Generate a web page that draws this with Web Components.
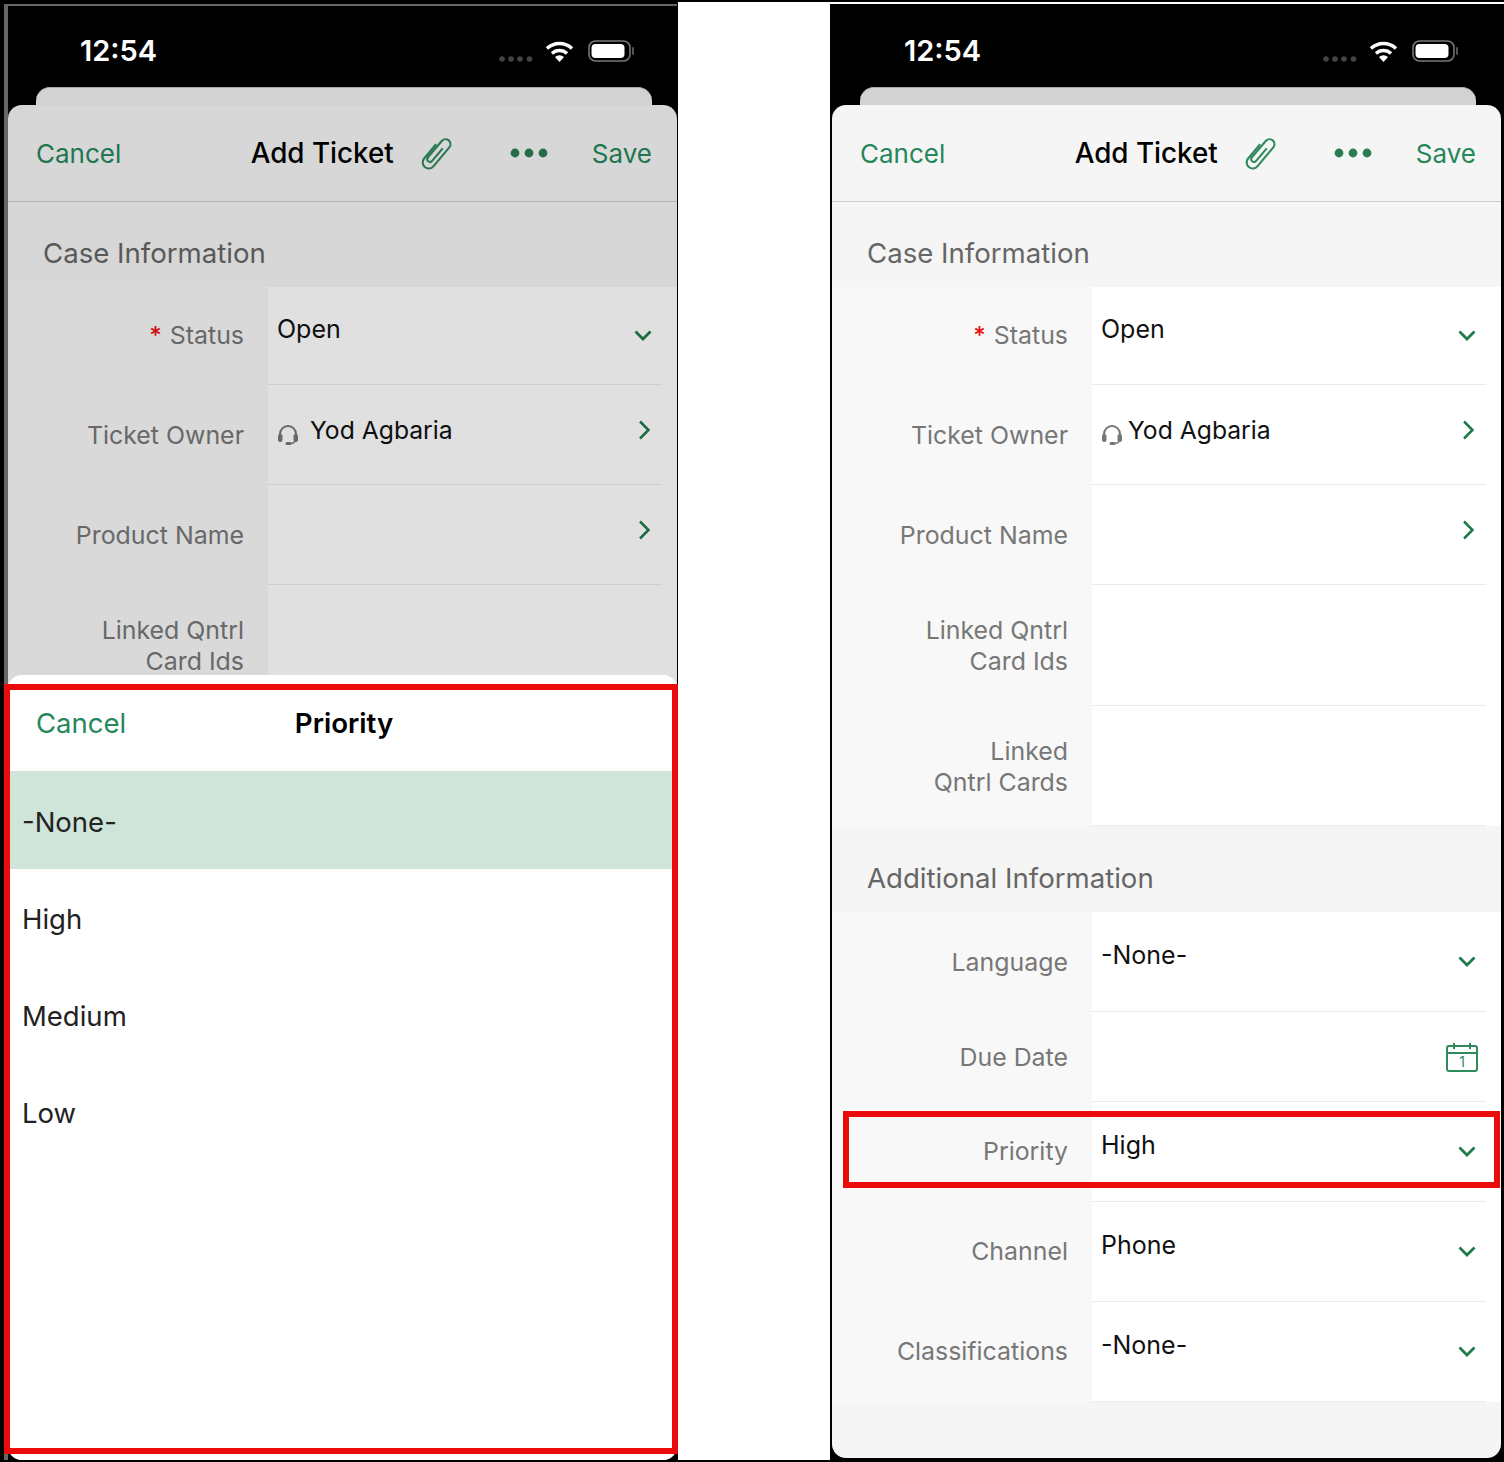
<!DOCTYPE html>
<html>
<head>
<meta charset="utf-8">
<title>Add Ticket</title>
<style>
  html, body { margin: 0; padding: 0; background: #fff; }
  body { font-family: Inter, "Noto Sans", sans-serif; }
</style>
</head>
<body>
<ticket-page>
  <phone-screen variant="left">
    <ticket-form dim owner-gap="11">
      <picker-sheet slot="sheet" title="Priority" options="-None-,High,Medium,Low" selected="-None-"></picker-sheet>
    </ticket-form>
    <red-frame slot="marks" style="left:4px;top:682px;width:674px;height:770px"></red-frame>
  </phone-screen>
  <phone-screen variant="right">
    <ticket-form owner-gap="5"></ticket-form>
    <red-frame slot="marks" style="left:13px;top:1107px;width:657px;height:77px"></red-frame>
  </phone-screen>
</ticket-page>

<script>
const GREEN = '#25875a';
const DARK_GREEN = '#1f7a4a';

const ICONS = {
  down: `<svg width="18" height="11" viewBox="0 0 18 11"><path d="M1.5 1.5 L9 9 L16.5 1.5" fill="none" stroke="${DARK_GREEN}" stroke-width="2.8"/></svg>`,
  right: `<svg width="13" height="20" viewBox="0 0 13 20"><path d="M2 1.5 L10.5 10 L2 18.5" fill="none" stroke="${DARK_GREEN}" stroke-width="2.5"/></svg>`,
  calendar: `<svg width="32" height="30" viewBox="0 0 32 30">
      <rect x="1" y="4" width="30" height="25" rx="2" fill="none" stroke="#2f8a5c" stroke-width="2"/>
      <path d="M1 11 H31 M8 1 V7 M24 1 V7" fill="none" stroke="#2f8a5c" stroke-width="2"/>
      <text x="16" y="25" text-anchor="middle" font-size="14" font-family="Inter, sans-serif" fill="#2f8a5c">1</text>
    </svg>`,
  headset: `<svg width="22" height="21" viewBox="0 0 22 21">
      <path d="M3 11 V10 a8 8 0 0 1 16 0 V11" fill="none" stroke="#777" stroke-width="2"/>
      <rect x="1" y="10" width="4.5" height="8" rx="2" fill="#777"/>
      <rect x="16.5" y="10" width="4.5" height="8" rx="2" fill="#777"/>
      <path d="M18 17 Q17.5 19.5 13 19.5" fill="none" stroke="#777" stroke-width="1.4"/>
      <rect x="8.5" y="18" width="6" height="3" rx="1.5" fill="#777"/>
    </svg>`
};

class TicketPage extends HTMLElement {
  constructor() {
    super();
    this.attachShadow({mode: 'open'}).innerHTML = `
      <style>
        :host {
          display: grid;
          grid-template-columns: 678px 674px;
          justify-content: space-between;
          box-sizing: border-box;
          height: 1462px;
          width: 1504px;
          border-top: 2px solid #000;
          border-bottom: 2px solid #000;
          background: #fff;
        }
      </style>
      <slot></slot>`;
  }
}

class PhoneScreen extends HTMLElement {
  constructor() {
    super();
    this.attachShadow({mode: 'open'}).innerHTML = `
      <style>
        :host {
          display: block;
          position: relative;
          background: #000;
          box-sizing: border-box;
        }
        :host([variant="left"]) { padding: 2px 1px 0 4px; }
        :host([variant="right"]) { margin-top: 2px; padding: 0 3px 2px 0; }
        .frame {
          box-sizing: border-box;
          height: 100%;
          display: flex;
          flex-direction: column;
          border-style: solid;
          border-width: 2px 0 0 4px;
          border-color: #666;
        }
        :host([variant="right"]) .frame { border-width: 2px 0 0 2px; border-color: #000; }
        .back {
          flex: none;
          height: 17px;
          margin: 0 25px 0 28px;
          border-radius: 14px 14px 0 0;
          background: #d2d2d2;
          border-top: 1px solid #aaa;
        }
        ::slotted(ticket-form) { flex: 1; min-height: 0; }
      </style>
      <div class="frame">
        <status-bar></status-bar>
        <div class="back"></div>
        <slot></slot>
      </div>
      <slot name="marks"></slot>`;
  }
}

class StatusBar extends HTMLElement {
  constructor() {
    super();
    this.attachShadow({mode: 'open'}).innerHTML = `
      <style>
        :host {
          display: flex;
          flex: none;
          align-items: center;
          box-sizing: border-box;
          height: 81px;
          padding: 8px 42px 0 72px;
          color: #fff;
        }
        .time { font: 600 29px Inter, sans-serif; flex: 1; }
        .icons { display: flex; align-items: center; gap: 12px; }
        svg { display: block; }
      </style>
      <span class="time">12:54</span>
      <span class="icons">
        <svg width="34" height="6" viewBox="0 0 34 6" style="margin-top:16px">
          <g fill="#444"><circle cx="3" cy="3" r="2.8"/><circle cx="12" cy="3" r="2.8"/><circle cx="21" cy="3" r="2.8"/><circle cx="30.5" cy="3" r="2.8"/></g>
        </svg>
        <svg width="29" height="22" viewBox="0 0 29 22">
          <g fill="none" stroke="#fff" stroke-width="3.4">
            <path d="M2 8.5 A18 18 0 0 1 27 8.5"/>
            <path d="M7 13.5 A11 11 0 0 1 22 13.5"/>
          </g>
          <path d="M14.5 22 L10 17 A6.5 6.5 0 0 1 19 17 Z" fill="#fff"/>
        </svg>
        <svg width="47" height="22" viewBox="0 0 47 22" style="margin-left:2px">
          <rect x="1" y="1" width="41" height="20" rx="6.5" fill="none" stroke="#777" stroke-width="1.6"/>
          <rect x="3.5" y="4" width="33" height="14" rx="4" fill="#fff"/>
          <rect x="44" y="7" width="2" height="8" rx="1" fill="#555"/>
        </svg>
      </span>`;
  }
}

class NavHeader extends HTMLElement {
  constructor() {
    super();
    this.attachShadow({mode: 'open'}).innerHTML = `
      <style>
        :host {
          display: flex;
          align-items: center;
          box-sizing: border-box;
          height: 97px;
          padding: 0 25px 0 28px;
          border-bottom: 1px solid #ccc;
          font-size: 26px;
          color: ${GREEN};
        }
        .title { margin-left: auto; color: #000; font-weight: 500; font-size: 27.8px; }
        .clip { margin-left: 27px; display: block; }
        .more { margin-left: 56px; display: block; }
        .save { margin-left: 44px; }
      </style>
      <span>Cancel</span>
      <span class="title">Add Ticket</span>
      <svg class="clip" width="33" height="33" viewBox="1.5 1 30 30">
        <g transform="rotate(40 16 16)" fill="none" stroke="#2f8a5c" stroke-width="1.9">
          <path d="M17 9 V24 a2.5 2.5 0 0 1 -5 0 V4.5 a4.5 4.5 0 0 1 9 0 V27 a5.5 5.5 0 0 1 -11 0 V10"/>
        </g>
      </svg>
      <svg class="more" width="38" height="10" viewBox="0 0 38 10">
        <g fill="#2a7d52"><circle cx="5" cy="5" r="4.4"/><circle cx="19" cy="5" r="4.4"/><circle cx="33" cy="5" r="4.4"/></g>
      </svg>
      <span class="save">Save</span>`;
  }
}

class SectionHead extends HTMLElement {
  constructor() {
    super();
    this.attachShadow({mode: 'open'}).innerHTML = `
      <style>
        :host {
          display: flex;
          align-items: center;
          box-sizing: border-box;
          height: 85px;
          padding: 16px 0 0 35px;
          font-size: 27.6px;
          color: #666;
        }
        :host([second]) { height: 86px; padding-top: 18px; }
      </style>
      <slot></slot>`;
  }
}

class FormRow extends HTMLElement {
  constructor() {
    super();
    this.attachShadow({mode: 'open'});
  }
  connectedCallback() {
    const label = (this.getAttribute('label') || '').split('|').join('<br>');
    const req = this.hasAttribute('required') ? '<span class="req">*</span> ' : '';
    const kind = this.getAttribute('icon');
    const icon = ICONS[kind] || '';
    const value = this.getAttribute('value') || '';
    const owner = this.hasAttribute('owner');
    const h = this.getAttribute('height') || 100;
    const gap = this.getAttribute('owner-gap') || 5;
    const nudge = this.getAttribute('label-nudge') || 0;
    this.shadowRoot.innerHTML = `
      <style>
        :host { display: grid; grid-template-columns: 260px 1fr; height: ${h}px; }
        .label {
          display: flex;
          align-items: center;
          justify-content: flex-end;
          text-align: right;
          padding: 0 24px 0 0;
          background: #f8f8f8;
          color: #777;
          font-size: 24.9px;
          line-height: 31px;
        }
        .label > div { position: relative; top: ${nudge}px; }
        .req { color: #e81010; font-size: 24px; font-weight: 500; margin-right: 1px; }
        .value {
          display: flex;
          align-items: center;
          padding: 0 25px 1px 9px;
          background: #fff;
          position: relative;
          font-size: 25px;
          color: #111;
        }
        .value::after {
          content: "";
          position: absolute;
          left: 0; right: 15px; bottom: 0;
          height: 1px;
          background: #ebebeb;
        }
        .text { flex: 1; padding-bottom: 14px; display: flex; align-items: center; }
        .text.owner { padding-bottom: 10px; font-size: 24.7px; }
        .text.owner svg { display: block; margin: 9px ${gap}px 0 0; }
        .icon { display: block; line-height: 0; }
        .icon.right { margin-bottom: 9px; margin-right: 1px; }
        .icon.calendar { margin: 1px -2px 0 0; }
      </style>
      <div class="label"><div>${req}${label}</div></div>
      <div class="value">
        <span class="text ${owner ? 'owner' : ''}">${owner ? ICONS.headset : ''}${value ? `<span>${value}</span>` : ''}</span>
        <span class="icon ${kind || ''}">${icon}</span>
      </div>`;
  }
}

class TicketForm extends HTMLElement {
  constructor() {
    super();
    this.attachShadow({mode: 'open'});
  }
  connectedCallback() {
    const gap = this.getAttribute('owner-gap') || 5;
    const row = (label, value, icon, extra = '') =>
      `<form-row label="${label}" value="${value}" icon="${icon}" ${extra}></form-row>`;
    this.shadowRoot.innerHTML = `
      <style>
        :host {
          display: block;
          position: relative;
          overflow: hidden;
          border-radius: 14px;
          background: #f5f5f5;
        }
        :host([dim]) .scrim {
          position: absolute;
          inset: 0;
          background: rgba(0, 0, 0, .12);
        }
      </style>
      <nav-header></nav-header>
      <section-head>Case Information</section-head>
      ${row('Status', 'Open', 'down', 'required height="98" label-nudge="-1"')}
      ${row('Ticket Owner', 'Yod Agbaria', 'right', `owner owner-gap="${gap}"`)}
      ${row('Product Name', '', 'right')}
      ${row('Linked Qntrl|Card Ids', '', '', 'height="121"')}
      ${row('Linked|Qntrl Cards', '', '', 'height="120" label-nudge="1"')}
      <section-head second>Additional Information</section-head>
      ${row('Language', '-None-', 'down')}
      ${row('Due Date', '', 'calendar', 'height="90"')}
      ${row('Priority', 'High', 'down', 'label-nudge="-1"')}
      ${row('Channel', 'Phone', 'down', 'label-nudge="-1"')}
      ${row('Classifications', '-None-', 'down', 'label-nudge="-1"')}
      <div class="scrim"></div>
      <slot name="sheet"></slot>`;
  }
}

class PickerSheet extends HTMLElement {
  constructor() {
    super();
    this.attachShadow({mode: 'open'});
  }
  connectedCallback() {
    const selected = this.getAttribute('selected');
    const options = this.getAttribute('options').split(',')
      .map(o => `<div class="option ${o === selected ? 'on' : ''}">${o}</div>`).join('');
    this.shadowRoot.innerHTML = `
      <style>
        :host {
          display: block;
          position: absolute;
          left: 0; right: 0; top: 570px; bottom: 0;
          background: #fff;
          border-radius: 14px 14px 0 0;
        }
        header {
          position: relative;
          display: flex;
          align-items: center;
          justify-content: center;
          box-sizing: border-box;
          height: 97px;
          padding-left: 3px;
          border-bottom: 1px solid #ddd;
          font-size: 27.7px;
        }
        .cancel { position: absolute; left: 28px; color: ${GREEN}; font-size: 27.5px; }
        .title { font-weight: 600; color: #000; }
        .option {
          display: flex;
          align-items: center;
          height: 97px;
          padding: 3px 0 0 14px;
          box-sizing: border-box;
          font-size: 27.5px;
          color: #222;
        }
        .option.on { background: #cfe5d9; }
      </style>
      <header><span class="cancel">Cancel</span><span class="title">${this.getAttribute('title')}</span></header>
      ${options}`;
  }
}

class RedFrame extends HTMLElement {
  constructor() {
    super();
    this.attachShadow({mode: 'open'}).innerHTML = `
      <style>
        :host {
          display: block;
          position: absolute;
          box-sizing: border-box;
          border: 6px solid #ea0b0b;
          pointer-events: none;
        }
      </style>`;
  }
}

customElements.define('ticket-page', TicketPage);
customElements.define('phone-screen', PhoneScreen);
customElements.define('status-bar', StatusBar);
customElements.define('nav-header', NavHeader);
customElements.define('section-head', SectionHead);
customElements.define('form-row', FormRow);
customElements.define('ticket-form', TicketForm);
customElements.define('picker-sheet', PickerSheet);
customElements.define('red-frame', RedFrame);
</script>
</body>
</html>
